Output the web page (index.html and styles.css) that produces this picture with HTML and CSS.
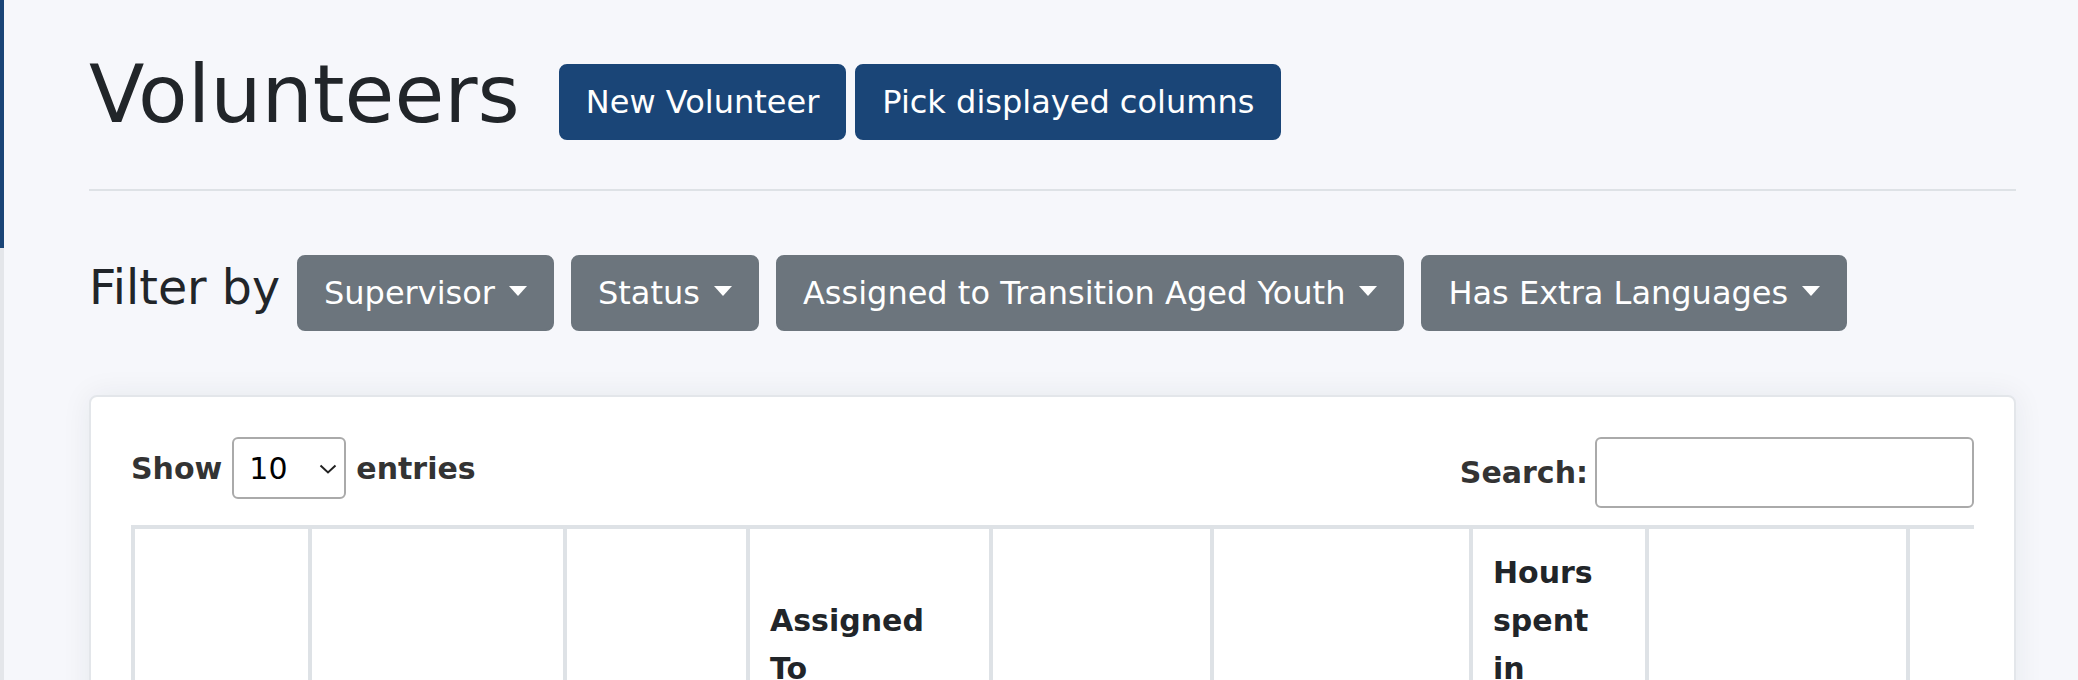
FILE: index.html
```html
<!DOCTYPE html>
<html lang="en">
<head>
<meta charset="utf-8">
<title>Volunteers</title>
<link rel="stylesheet" href="styles.css">
</head>
<body>
<div class="layout">
  <aside class="sidebar"><div class="sidebar-active"></div></aside>
  <main class="content">
    <div class="title-row">
      <h1 class="page-title">Volunteers</h1>
      <div class="title-actions">
        <a class="btn btn-primary" href="#">New Volunteer</a>
        <a class="btn btn-primary" href="#">Pick displayed columns</a>
      </div>
    </div>
    <hr class="divider">
    <div class="filter-row">
      <h3 class="filter-label">Filter by</h3>
      <button class="btn btn-secondary dropdown-toggle" type="button">Supervisor</button>
      <button class="btn btn-secondary dropdown-toggle" type="button">Status</button>
      <button class="btn btn-secondary dropdown-toggle" type="button">Assigned to Transition Aged Youth</button>
      <button class="btn btn-secondary dropdown-toggle" type="button">Has Extra Languages</button>
    </div>
    <div class="card">
      <div class="card-body">
        <div class="dt-controls">
          <label class="dt-length">
            <span>Show</span>
            <span class="select-wrap">
              <select class="dt-select"><option>10</option><option>25</option><option>50</option><option>100</option></select>
              <svg class="select-chevron" width="18" height="10" viewBox="0 0 18 10"><polyline points="1.5,1.5 9,8.5 16.5,1.5" fill="none" stroke="#222" stroke-width="2"/></svg>
            </span>
            <span>entries</span>
          </label>
          <label class="dt-search">
            <span>Search:</span>
            <input class="dt-input" type="search">
          </label>
        </div>
        <div class="dt-scroll">
          <table class="dt-table">
            <thead>
              <tr>
                <th class="col-name">Name</th>
                <th class="col-email">Email</th>
                <th class="col-supervisor">Supervisor</th>
                <th class="col-tay">Assigned To Transition Aged Youth</th>
                <th class="col-cases">Case Number(s)</th>
                <th class="col-contact">Last Attempted Contact</th>
                <th class="col-hours">Hours spent in last 30 days</th>
                <th class="col-languages">Extra Languages</th>
                <th class="col-actions">Actions</th>
              </tr>
            </thead>
            <tbody></tbody>
          </table>
        </div>
      </div>
    </div>
  </main>
</div>
</body>
</html>
```
FILE: styles.css
```css
html, body {
  margin: 0;
  height: 100%;
  overflow: hidden;
}

body {
  font-family: "DejaVu Sans", "Liberation Sans", sans-serif;
  background: #f6f7fb;
  color: #212529;
}

.layout {
  display: flex;
  min-height: 100vh;
}

.sidebar {
  width: 4px;
  flex: none;
  background: #e4e6ea;
}

.sidebar-active {
  height: 248px;
  background: #1a4577;
}

.content {
  flex: 1;
  min-width: 0;
  padding: 46px 62px 0 85px;
}

.title-row {
  display: flex;
  align-items: flex-start;
}

.page-title {
  margin: 0;
  font-size: 81px;
  font-weight: 400;
  line-height: 96px;
}

.title-actions {
  display: flex;
  gap: 9px;
  margin-left: 39px;
  margin-top: 18px;
}

.btn {
  display: inline-block;
  font-family: "DejaVu Sans", "Liberation Sans", sans-serif;
  font-size: 32px;
  line-height: 48px;
  padding: 12px 25px;
  border: 2px solid transparent;
  border-radius: 8px;
  color: #fff;
  text-decoration: none;
  white-space: nowrap;
  cursor: pointer;
}

.btn-primary {
  background: #1a4577;
  border-color: #1a4577;
}

.btn-secondary {
  background: #6c757d;
  border-color: #6c757d;
}

.dropdown-toggle::after {
  content: "";
  display: inline-block;
  margin-left: 14px;
  vertical-align: 8px;
  border-top: 10px solid #fff;
  border-left: 9.5px solid transparent;
  border-right: 9.5px solid transparent;
}

.divider {
  border: 0;
  height: 2px;
  background: #dee2e6;
  margin: 47px 0 0;
}

.filter-row {
  display: flex;
  align-items: baseline;
  gap: 17px;
  margin-top: 64px;
}

.filter-label {
  margin: 0;
  font-size: 47.5px;
  font-weight: 400;
  line-height: 1.2;
}

.card {
  margin-top: 64px;
  background: #fff;
  border: 2px solid #e3e6ea;
  border-radius: 8px;
  box-shadow: 0 0 30px rgba(33, 40, 60, 0.07);
}

.card-body {
  padding: 40px;
}

.dt-controls {
  display: flex;
  justify-content: space-between;
  align-items: flex-start;
}

.dt-length,
.dt-search {
  display: flex;
  align-items: baseline;
  font-size: 30px;
  font-weight: 700;
  color: #333;
}

.dt-length {
  gap: 10px;
}

.select-wrap {
  position: relative;
  display: inline-block;
}

.dt-select {
  appearance: none;
  -webkit-appearance: none;
  box-sizing: border-box;
  width: 114px;
  height: 62px;
  padding: 0 40px 0 15px;
  border: 2px solid #aaa;
  border-radius: 6px;
  background: #fff;
  font-family: "DejaVu Sans", "Liberation Sans", sans-serif;
  font-size: 30px;
  font-weight: 400;
  color: #000;
}

.select-chevron {
  position: absolute;
  right: 9px;
  top: 27px;
  pointer-events: none;
}

.dt-input {
  box-sizing: border-box;
  width: 379px;
  height: 71px;
  margin-left: 7px;
  padding: 0 10px;
  border: 2px solid #aaa;
  border-radius: 6px;
  background: #fff;
  font-family: "DejaVu Sans", "Liberation Sans", sans-serif;
  font-size: 30px;
}

.dt-scroll {
  margin-top: 17px;
  overflow: hidden;
}

.dt-table {
  border-collapse: separate;
  border-spacing: 0;
  table-layout: fixed;
  width: 2025px;
}

.dt-table th {
  box-sizing: border-box;
  border-left: 4px solid #dee2e6;
  border-top: 4px solid #dee2e6;
  padding: 20px 60px 20px 20px;
  text-align: left;
  vertical-align: bottom;
  font-size: 30px;
  font-weight: 700;
  line-height: 48px;
  color: #212529;
}

.col-name { width: 177px; }
.col-email { width: 255px; }
.col-supervisor { width: 183px; }
.col-tay { width: 243px; }
.col-cases { width: 221px; }
.col-contact { width: 259px; }
.col-hours { width: 176px; }
.col-languages { width: 261px; }
.col-actions { width: 250px; }
```
